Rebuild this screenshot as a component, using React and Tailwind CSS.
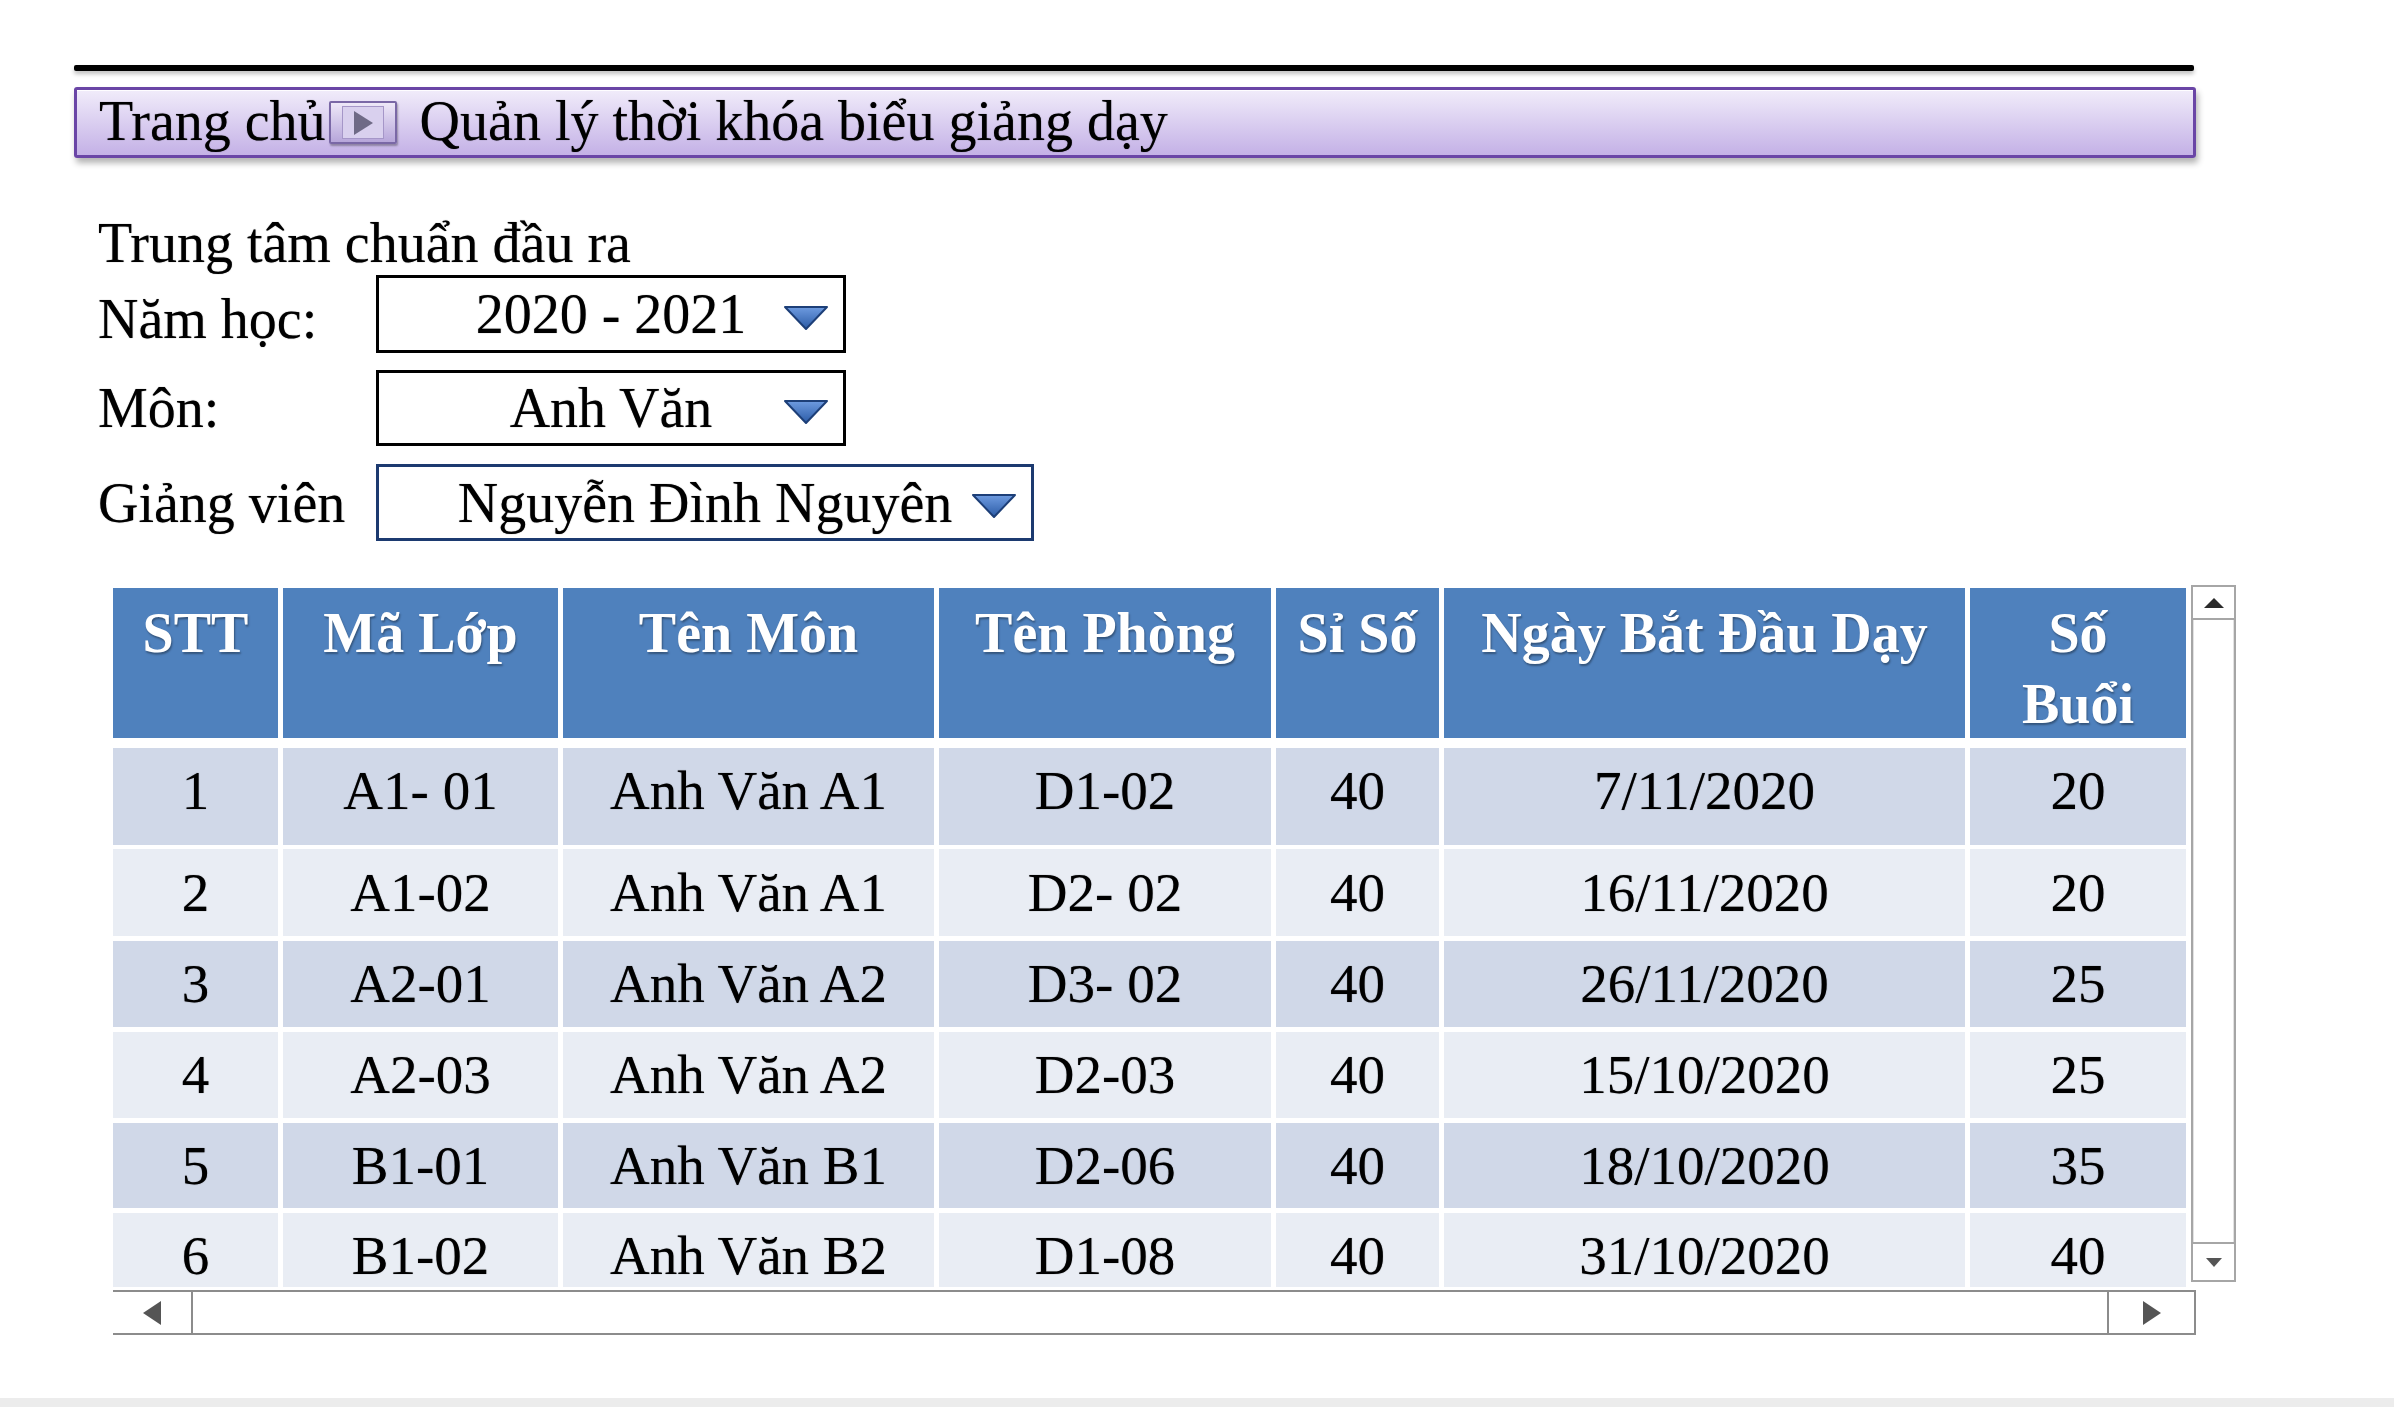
import React from 'react';

const cols = [
  { label: 'STT' },
  { label: 'Mã Lớp' },
  { label: 'Tên Môn' },
  { label: 'Tên Phòng' },
  { label: 'Sỉ Số' },
  { label: 'Ngày Bắt Đầu Dạy' },
  { label: ['Số', 'Buổi'] },
];

const rows = [
  ['1', 'A1- 01', 'Anh Văn A1', 'D1-02', '40', '7/11/2020', '20'],
  ['2', 'A1-02', 'Anh Văn A1', 'D2- 02', '40', '16/11/2020', '20'],
  ['3', 'A2-01', 'Anh Văn A2', 'D3- 02', '40', '26/11/2020', '25'],
  ['4', 'A2-03', 'Anh Văn A2', 'D2-03', '40', '15/10/2020', '25'],
  ['5', 'B1-01', 'Anh Văn B1', 'D2-06', '40', '18/10/2020', '35'],
  ['6', 'B1-02', 'Anh Văn B2', 'D1-08', '40', '31/10/2020', '40'],
];

// row box (height + gap above) and cell look
const rowBox = [
  'h-[97px] mt-[10px]',
  'h-[87px] mt-[4px]',
  'h-[86px] mt-[5px]',
  'h-[86px] mt-[5px]',
  'h-[85px] mt-[5px]',
  'h-[86px] mt-[5px]',
];
const rowCell = [
  'bg-[#d0d8e8] pb-[12px]',
  'bg-[#e9edf4]',
  'bg-[#d0d8e8]',
  'bg-[#e9edf4]',
  'bg-[#d0d8e8]',
  'bg-[#e9edf4]',
];

const gridCols = 'grid grid-cols-[165px_275px_371px_332px_163px_521px_216px] gap-x-[5px]';
const ink = '[text-shadow:0_0_1px_rgba(0,0,0,0.55)]';

function DropTriangle() {
  return (
    <svg width="46" height="27" viewBox="0 0 46 27" className="shrink-0">
      <defs>
        <linearGradient id="dd" x1="0" y1="0" x2="0" y2="1">
          <stop offset="0" stopColor="#6e9be0" />
          <stop offset="1" stopColor="#2b5ba6" />
        </linearGradient>
      </defs>
      <polygon points="2,3 44,3 23,25" fill="url(#dd)" stroke="#1d3f78" strokeWidth="2" strokeLinejoin="round" />
    </svg>
  );
}

function Dropdown({ value, width, border }) {
  return (
    <div className={`flex items-center h-full bg-white ${width} ${border}`}>
      <div className="w-[46px] ml-[14px] shrink-0" />
      <span className="flex-1 text-center leading-[60px]">{value}</span>
      <div className="mr-[14px] mt-[6px]">
        <DropTriangle />
      </div>
    </div>
  );
}

export default function App() {
  return (
    <div className={`w-[2394px] h-[1407px] bg-white overflow-hidden flex flex-col font-['Liberation_Serif','Times_New_Roman',serif] text-black ${ink}`}>
      <div className="pl-[74px] pt-[65px]">
        <div className="w-[2120px] h-[6px] bg-black rounded-[2px] shadow-[0_3px_4px_rgba(0,0,0,0.25)]" />

        <div className="mt-[16px] w-[2122px] h-[71px] rounded-[3px] border-[3px] border-[#6a45a6] bg-gradient-to-b from-[#f1ecfa] to-[#c4b1e6] shadow-[2px_5px_6px_rgba(0,0,0,0.3),inset_0_1px_0_rgba(255,255,255,0.9)] flex items-center pl-[22px] pb-[4px] text-[56px] leading-[60px]">
          <span>Trang chủ</span>
          <div className="ml-[3px] mt-[4px] w-[68px] h-[43px] rounded-[2px] border-2 border-[#7a68a6] bg-gradient-to-b from-[#eee8f8] to-[#b7a6da] shadow-[1px_2px_2px_rgba(0,0,0,0.3)] flex items-center justify-center">
            <div className="w-[42px] h-[33px] bg-[#d9d0ee] border border-[#a596c8] flex items-center justify-center">
              <svg width="22" height="26" viewBox="0 0 22 26">
                <polygon points="2,1 21,13 2,25" fill="#6f6a86" />
              </svg>
            </div>
          </div>
          <span className="ml-[23px]">Quản lý thời khóa biểu giảng dạy</span>
        </div>

        <div className="ml-[24px] mt-[55px] text-[56px] leading-[60px]">
          <div>Trung tâm chuẩn đầu ra</div>

          <div className="mt-[2px] flex items-center h-[78px]">
            <span className="w-[278px] pt-[10px]">Năm học:</span>
            <Dropdown value="2020 - 2021" width="w-[470px]" border="border-[3px] border-black" />
          </div>
          <div className="mt-[17px] flex items-center h-[76px]">
            <span className="w-[278px]">Môn:</span>
            <Dropdown value="Anh Văn" width="w-[470px]" border="border-[3px] border-black" />
          </div>
          <div className="mt-[18px] flex items-center h-[77px]">
            <span className="w-[278px]">Giảng viên</span>
            <Dropdown value="Nguyễn Đình Nguyên" width="w-[658px]" border="border-[3px] border-[#1c3a70]" />
          </div>
        </div>

        <div className="ml-[39px] mt-[47px] flex flex-col">
          <div className="flex items-start">
            <div className="w-[2075px] h-[699px] overflow-hidden">
              <div className={gridCols}>
                {cols.map((c, i) => (
                  <div
                    key={i}
                    className="h-[150px] bg-[#4f81bd] text-white font-bold text-[56px] leading-[71px] pt-[10px] text-center [text-shadow:1px_2px_2px_rgba(0,0,0,0.35)]"
                  >
                    {Array.isArray(c.label) ? (
                      <>
                        {c.label[0]}
                        <br />
                        {c.label[1]}
                      </>
                    ) : (
                      c.label
                    )}
                  </div>
                ))}
              </div>
              {rows.map((r, ri) => (
                <div key={ri} className={`${gridCols} ${rowBox[ri]}`}>
                  {r.map((cell, ci) => (
                    <div
                      key={ci}
                      className={`flex items-center justify-center text-[55px] leading-[60px] ${rowCell[ri]}`}
                    >
                      {cell}
                    </div>
                  ))}
                </div>
              ))}
            </div>

            <div className="ml-[3px] -mt-[3px] w-[45px] h-[697px] border-2 border-[#a6a6a6] bg-white flex flex-col">
              <div className="h-[33px] border-b-2 border-[#a6a6a6] flex items-center justify-center">
                <svg width="20" height="10" viewBox="0 0 20 10">
                  <polygon points="0,10 10,0 20,10" fill="#2b2b2b" />
                </svg>
              </div>
              <div className="flex-1 border-x border-[#e2e2e2]" />
              <div className="h-[38px] border-t-2 border-[#a6a6a6] flex items-center justify-center">
                <svg width="16" height="9" viewBox="0 0 16 9">
                  <polygon points="0,0 16,0 8,9" fill="#555" />
                </svg>
              </div>
            </div>
          </div>

          <div className="mt-[3px] w-[2083px] h-[45px] border-y-2 border-[#8c8c8c] bg-white flex">
            <div className="w-[80px] h-full border-r-2 border-[#8c8c8c] flex items-center justify-center">
              <svg width="18" height="24" viewBox="0 0 18 24">
                <polygon points="18,0 0,12 18,24" fill="#555" />
              </svg>
            </div>
            <div className="flex-1" />
            <div className="w-[89px] h-full border-l-2 border-r-2 border-[#8c8c8c] flex items-center justify-center">
              <svg width="18" height="24" viewBox="0 0 18 24">
                <polygon points="0,0 18,12 0,24" fill="#555" />
              </svg>
            </div>
          </div>
        </div>
      </div>

      <div className="mt-auto h-[9px] bg-[#ececec]" />
    </div>
  );
}
